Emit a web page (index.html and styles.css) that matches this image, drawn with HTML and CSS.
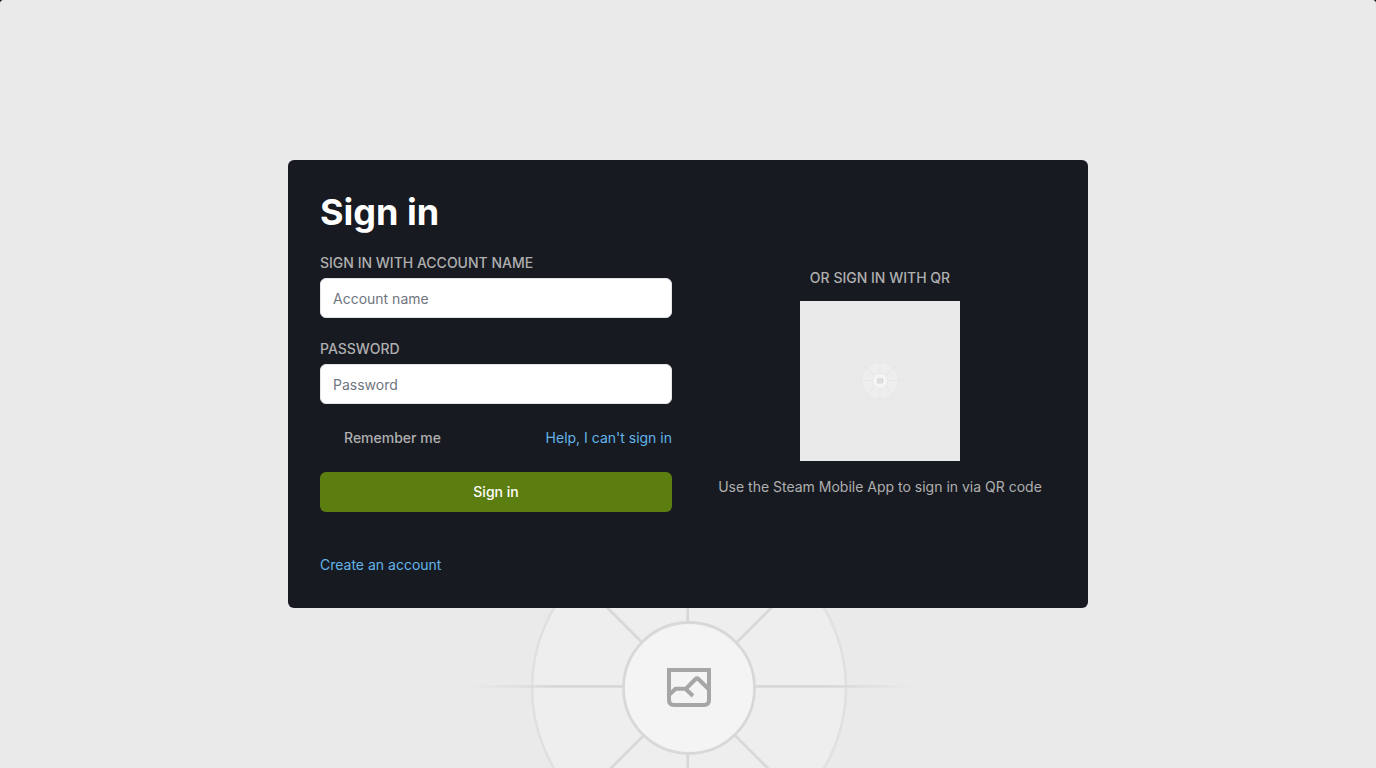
FILE: index.html
```html
<!DOCTYPE html>
<html lang="en">
<head>
<meta charset="utf-8">
<meta name="viewport" content="width=device-width, initial-scale=1">
<title>Sign in</title>
<link rel="stylesheet" href="styles.css">
</head>
<body>
<svg class="backdrop" viewBox="0 0 1376 1376" preserveAspectRatio="xMidYMin slice" aria-hidden="true">
  <defs>
    <linearGradient id="fade" gradientUnits="userSpaceOnUse" x1="466" y1="0" x2="916" y2="0">
      <stop offset="0" stop-color="#d8d8d8" stop-opacity="0"/>
      <stop offset="0.2" stop-color="#d8d8d8"/>
      <stop offset="0.8" stop-color="#d8d8d8"/>
      <stop offset="1" stop-color="#d8d8d8" stop-opacity="0"/>
    </linearGradient>
    <symbol id="placeholder" viewBox="0 0 1376 1376">
      <rect width="1376" height="1376" fill="#eaeaea"/>
      <circle cx="689" cy="688" r="157" fill="#eeeeee" stroke="#e0e0e0" stroke-width="2.6"/>
      <rect x="466" y="685" width="450" height="2.8" fill="url(#fade)"/>
      <rect x="466" y="685" width="450" height="2.8" fill="url(#fade)" transform="rotate(90 687.3 686.8)"/>
      <rect x="466" y="687" width="450" height="2.8" fill="url(#fade)" transform="rotate(45 688 688.5)"/>
      <rect x="466" y="687.6" width="450" height="2.8" fill="url(#fade)" transform="rotate(-45 690 689)"/>
      <circle cx="689" cy="688" r="65.5" fill="#f4f4f4" stroke="#d8d8d8" stroke-width="2.8"/>
      <g fill="none" stroke="#a6a6a6" stroke-width="4">
        <path d="M669 670H709V700Q709 705 704 705H674Q669 705 669 700Z"/>
        <path d="M669 695L675.5 688.7H686L695.6 679Q697 677.6 698.4 679L709 689.5M685.5 688.7L693 696"/>
      </g>
    </symbol>
  </defs>
  <use href="#placeholder"/>
</svg>
<main class="page">
  <section class="card">
    <form class="account">
      <h1 class="title">Sign in</h1>
      <div class="field">
        <label class="label" for="account">SIGN IN WITH ACCOUNT NAME</label>
        <input class="input" id="account" type="text" placeholder="Account name">
      </div>
      <div class="field">
        <label class="label" for="password">PASSWORD</label>
        <input class="input" id="password" type="password" placeholder="Password">
      </div>
      <div class="options">
        <label class="remember" for="remember"><input class="check" id="remember" type="checkbox">Remember me</label>
        <a class="link" href="#help">Help, I can't sign in</a>
      </div>
      <button class="submit" type="submit">Sign in</button>
      <a class="link create" href="#create">Create an account</a>
    </form>
    <div class="qr">
      <h2 class="label">OR SIGN IN WITH QR</h2>
      <svg class="code" viewBox="0 0 1376 1376" role="img" aria-label="QR code"><use href="#placeholder"/></svg>
      <p class="hint">Use the Steam Mobile App to sign in via QR code</p>
    </div>
  </section>
</main>
</body>
</html>
```
FILE: styles.css
```css
* { box-sizing: border-box; }

html { background: #202020; }

body {
  position: relative;
  margin: 0;
  min-height: 100vh;
  overflow: hidden;
  border-radius: 4px 4px 0 0;
  background: #eaeaea;
  color: #afafaf;
  font: 14px/20px Inter, sans-serif;
}

.backdrop {
  position: absolute;
  top: 0;
  left: 0;
  width: 100%;
  height: 100%;
  border-radius: 4px 4px 0 0;
}

.page {
  position: relative;
  display: flex;
  align-items: center;
  justify-content: center;
  min-height: 100vh;
}

.card {
  display: grid;
  grid-template-columns: 1fr 1fr;
  gap: 32px;
  width: 100%;
  max-width: 800px;
  padding: 32px;
  border-radius: 6px;
  background: #171a21;
}

.account {
  display: flex;
  flex-direction: column;
  gap: 24px;
}

.title {
  margin: 0;
  color: #fff;
  font-size: 36px;
  line-height: 40px;
  font-weight: 700;
}

.field {
  display: flex;
  flex-direction: column;
  gap: 8px;
}

.label {
  margin: 0;
  font-size: 14px;
  line-height: 14px;
  font-weight: 500;
}

.input {
  width: 100%;
  height: 40px;
  padding: 8px 12px;
  border: 1px solid #e2e5ea;
  border-radius: 6px;
  background: #fff;
  color: #171a21;
  font: inherit;
}

.input::placeholder {
  color: #71757e;
  opacity: 1;
}

.options {
  display: flex;
  align-items: center;
  justify-content: space-between;
}

.remember {
  display: flex;
  align-items: center;
  gap: 8px;
  font-weight: 500;
}

.check {
  appearance: none;
  width: 16px;
  height: 16px;
  margin: 0;
  border: 1px solid #15181f;
  border-radius: 3px;
}

.link {
  color: #62b4ea;
  text-decoration: none;
}

.submit {
  height: 40px;
  border: 0;
  border-radius: 6px;
  background: #5c7e10;
  color: #fff;
  font: inherit;
  font-weight: 500;
}

.create {
  align-self: flex-start;
  margin-top: 18px;
  line-height: 22px;
}

.qr {
  display: flex;
  flex-direction: column;
  align-items: center;
  justify-content: center;
  gap: 16px;
}

.code {
  width: 160px;
  height: 160px;
}

.hint { margin: 0; }
```
